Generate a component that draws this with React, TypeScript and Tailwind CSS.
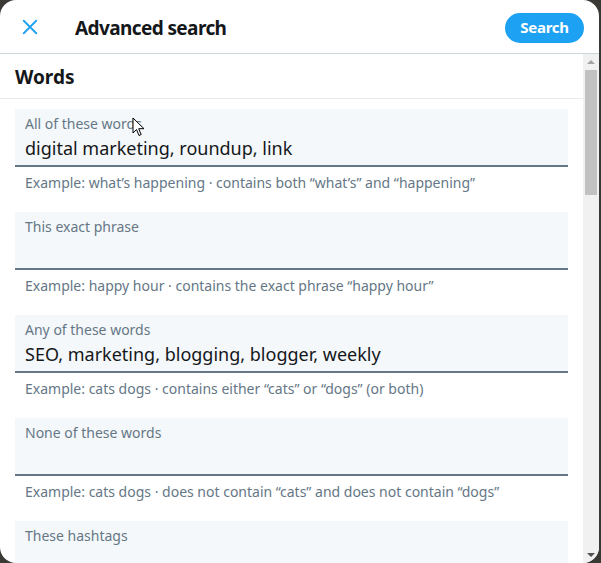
import React from 'react';

const fields = [
  {
    label: 'All of these words',
    value: 'digital marketing, roundup, link',
    help: 'Example: what\u2019s happening \u00b7 contains both \u201cwhat\u2019s\u201d and \u201chappening\u201d',
  },
  {
    label: 'This exact phrase',
    value: '',
    help: 'Example: happy hour \u00b7 contains the exact phrase \u201chappy hour\u201d',
  },
  {
    label: 'Any of these words',
    value: 'SEO, marketing, blogging, blogger, weekly',
    help: 'Example: cats dogs \u00b7 contains either \u201ccats\u201d or \u201cdogs\u201d (or both)',
  },
  {
    label: 'None of these words',
    value: '',
    help: 'Example: cats dogs \u00b7 does not contain \u201ccats\u201d and does not contain \u201cdogs\u201d',
  },
  {
    label: 'These hashtags',
    value: '',
    help: 'Example: #ThrowbackThursday \u00b7 contains the hashtag #ThrowbackThursday',
  },
];

const Field = ({ label, value, help }: { label: string; value: string; help: string }) => (
  <div>
    <div className="h-[58px] bg-[#f5f8fa] border-b-2 border-[#657786] px-[10px] pt-[6px]">
      <div className="text-[14px] leading-[18px] text-[#657786]">{label}</div>
      {value && <div className="text-[18px] leading-[24px] mt-[3px] text-[#14171a]">{value}</div>}
    </div>
    <div className="pl-[10px] pt-[6px] pb-[19px] text-[14px] leading-[20px] text-[#657786]">{help}</div>
  </div>
);

export default function App() {
  return (
    <div
      className="w-[601px] h-[563px] bg-[#3b3936] overflow-hidden"
      style={{ fontFamily: '"Segoe UI", "Noto Sans", sans-serif' }}
    >
      <div className="relative w-[599px] h-[563px] bg-white rounded-[16px] overflow-hidden flex flex-col">
        {/* header */}
        <div className="h-[54px] shrink-0 flex items-center border-b border-[#ccd6dd] pl-[14px] pr-[15px]">
          <div className="w-[32px] h-[32px] flex items-center justify-center">
            <svg width="20" height="20" viewBox="0 0 24 24" fill="none" stroke="#1da1f2" strokeWidth="2.2" strokeLinecap="round">
              <path d="M4.5 4.5l15 15M19.5 4.5l-15 15" />
            </svg>
          </div>
          <div className="ml-[29px] pt-[4px] text-[19px] font-bold tracking-[-0.6px] text-[#14171a]">Advanced search</div>
          <button className="ml-auto mt-[2px] w-[79px] h-[30px] rounded-full bg-[#1da1f2] text-white text-[15px] font-bold tracking-[-0.3px]">
            Search
          </button>
        </div>

        {/* body */}
        <div className="flex-1 flex min-h-0">
          <div className="flex-1 min-w-0">
            <div className="h-[45px] flex items-center px-[15px] pt-[3px] border-b border-[#e6ecf0] text-[19px] font-bold text-[#14171a]">
              Words
            </div>
            <div className="px-[15px] pt-[10px]">
              {fields.map((f) => (
                <Field key={f.label} {...f} />
              ))}
            </div>
          </div>
          {/* scrollbar */}
          <div className="w-[16px] shrink-0 bg-[#f1f1f1] flex flex-col items-center">
            <div className="h-[16px] w-full flex items-center justify-center">
              <div className="w-0 h-0 border-l-[4px] border-r-[4px] border-b-[4px] border-l-transparent border-r-transparent border-b-[#a3a3a3]" />
            </div>
            <div className="w-[12px] h-[125px] bg-[#c1c1c1]" />
            <div className="flex-1" />
            <div className="h-[16px] w-full flex items-center justify-center">
              <div className="w-0 h-0 border-l-[4px] border-r-[4px] border-t-[4px] border-l-transparent border-r-transparent border-t-[#505050]" />
            </div>
          </div>
        </div>

        {/* mouse pointer */}
        <svg className="absolute left-[132px] top-[117px]" width="14" height="21" viewBox="0 0 14 21">
          <path d="M1 1v15l3.5-3.5 2.5 6 2.2-1-2.5-5.8H12z" fill="#fff" stroke="#000" strokeWidth="1" strokeLinejoin="round" />
        </svg>
      </div>
    </div>
  );
}
